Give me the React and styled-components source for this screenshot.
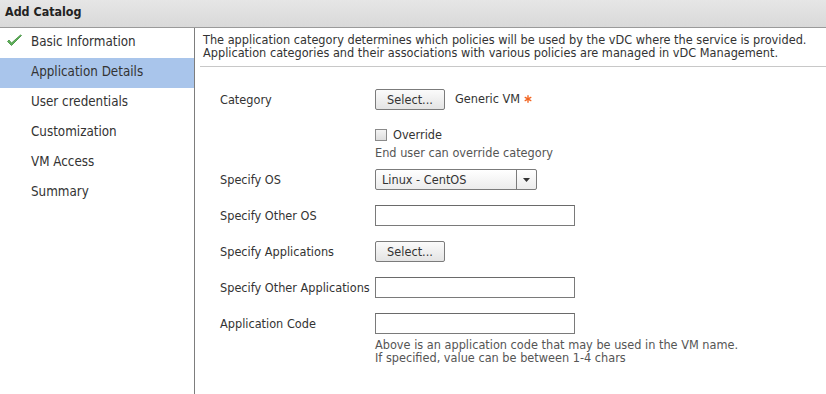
import React from 'react'
import styled, { createGlobalStyle } from 'styled-components'

const Global = createGlobalStyle`
  html, body { margin: 0; padding: 0; background: #fff; }
  body {
    font-family: "DejaVu Sans Condensed", "DejaVu Sans", sans-serif;
    font-size: 12.6px;
    color: #333;
  }
`

const Page = styled.div`
  width: 826px;
  height: 394px;
  display: flex;
  flex-direction: column;
  overflow: hidden;
`

const Header = styled.div`
  box-sizing: border-box;
  height: 28px;
  flex: none;
  display: flex;
  align-items: center;
  padding: 0 0 4px 5px;
  font-weight: bold;
  font-size: 12.4px;
  color: #222;
  background: linear-gradient(#e6e6e6, #d9d9d9);
  border-bottom: 1px solid #9a9a9a;
`

const Body = styled.div`
  flex: 1;
  display: flex;
`

const Sidebar = styled.ul`
  width: 194px;
  flex: none;
  margin: 0;
  padding: 0;
  list-style: none;
  border-right: 1px solid #7d7d7d;
`

const Step = styled.li`
  box-sizing: border-box;
  height: 30px;
  display: flex;
  align-items: center;
  padding: 0 0 3px 31px;
  position: relative;
  font-size: 13.3px;
  color: #333;
  background: ${p => (p.$active ? '#a9c5eb' : 'transparent')};
`

const Check = styled.svg`
  position: absolute;
  left: 6px;
  top: 6px;
`

const Content = styled.div`
  flex: 1;
  padding: 5px 0 0 5px;
`

const Intro = styled.p`
  margin: 0;
  padding: 0 0 7px 3px;
  line-height: 13px;
  color: #333;
  border-bottom: 1px solid #c8c8c8;
`

const Form = styled.div`
  padding: 22px 0 0 20px;
`

const Row = styled.div`
  display: grid;
  grid-template-columns: 155px 1fr;
  align-items: start;
  margin-bottom: ${p => p.$gap ?? 15}px;
`

const Label = styled.div`
  line-height: 21px;
  white-space: nowrap;
`

const Control = styled.div`
  display: flex;
  align-items: center;
  gap: 10px;
  flex-wrap: wrap;
`

const Button = styled.button`
  width: 70px;
  height: 21px;
  padding: 0;
  font: inherit;
  color: #333;
  border: 1px solid #7b7b7b;
  border-radius: 2px;
  background: linear-gradient(#fbfbfb, #e4e4e4);
`

const Value = styled.span`
  display: inline-flex;
  align-items: center;
  gap: 4px;
  margin-top: -2px;
`

const TextInput = styled.input`
  box-sizing: border-box;
  width: 200px;
  height: 21px;
  margin: 0;
  border: 1px solid #7a7a7a;
  border-top-color: #6a6a6a;
  background: #fff;
`

const Select = styled.div`
  box-sizing: border-box;
  width: 162px;
  height: 21px;
  display: flex;
  border: 1px solid #7b7b7b;
  border-radius: 2px;
  background: linear-gradient(#ffffff, #ececec);
`

const SelectText = styled.span`
  flex: 1;
  padding-left: 6px;
  line-height: 19px;
`

const SelectArrow = styled.span`
  width: 19px;
  border-left: 1px solid #7b7b7b;
  display: flex;
  align-items: center;
  justify-content: center;
`

const Stack = styled.div`
  display: flex;
  flex-direction: column;
`

const CheckLine = styled.label`
  display: flex;
  align-items: center;
  gap: 6px;
  line-height: 14px;
`

const Box = styled.span`
  box-sizing: border-box;
  width: 12px;
  height: 12px;
  border: 1px solid #8a8a8a;
  background: linear-gradient(#f4f4f4, #dedede);
`

const Hint = styled.div`
  color: #555;
  line-height: 13px;
  margin-top: ${p => p.$top ?? 0}px;
`

const steps = [
  'Basic Information',
  'Application Details',
  'User credentials',
  'Customization',
  'VM Access',
  'Summary',
]

const Asterisk = () => (
  <svg width="8" height="8" viewBox="0 0 8 8">
    <g stroke="#f26522" strokeWidth="1.4" strokeLinecap="round">
      <line x1="4" y1="0.8" x2="4" y2="7.2" />
      <line x1="1.2" y1="2.4" x2="6.8" y2="5.6" />
      <line x1="1.2" y1="5.6" x2="6.8" y2="2.4" />
    </g>
  </svg>
)

export default function App() {
  return (
    <Page>
      <Global />
      <Header>Add Catalog</Header>
      <Body>
        <Sidebar>
          {steps.map((s, i) => (
            <Step key={s} $active={i === 1}>
              {i === 0 && (
                <Check width="17" height="14" viewBox="0 0 17 14">
                  <path
                    d="M1.5 7.5 L5.5 11.5 L15.5 1.5 L14.5 1 L5.5 9 L3 6 Z"
                    fill="#5fb35a"
                    stroke="#3d8a3a"
                    strokeWidth="0.8"
                    strokeLinejoin="round"
                  />
                </Check>
              )}
              {s}
            </Step>
          ))}
        </Sidebar>
        <Content>
          <Intro>
            The application category determines which policies will be used by the vDC where the service is provided.
            <br />
            Application categories and their associations with various policies are managed in vDC Management.
          </Intro>
          <Form>
            <Row $gap={18}>
              <Label>Category</Label>
              <Control>
                <Button>Select...</Button>
                <Value>
                  Generic VM <Asterisk />
                </Value>
              </Control>
            </Row>
            <Row $gap={10}>
              <span />
              <Stack>
                <CheckLine>
                  <Box /> Override
                </CheckLine>
                <Hint $top={4}>End user can override category</Hint>
              </Stack>
            </Row>
            <Row>
              <Label>Specify OS</Label>
              <Control>
                <Select>
                  <SelectText>Linux - CentOS</SelectText>
                  <SelectArrow>
                    <svg width="7" height="4" viewBox="0 0 7 4">
                      <path d="M0 0 H7 L3.5 4 Z" fill="#333" />
                    </svg>
                  </SelectArrow>
                </Select>
              </Control>
            </Row>
            <Row>
              <Label>Specify Other OS</Label>
              <Control>
                <TextInput />
              </Control>
            </Row>
            <Row>
              <Label>Specify Applications</Label>
              <Control>
                <Button>Select...</Button>
              </Control>
            </Row>
            <Row>
              <Label>Specify Other Applications</Label>
              <Control>
                <TextInput />
              </Control>
            </Row>
            <Row $gap={0}>
              <Label>Application Code</Label>
              <Stack>
                <TextInput />
                <Hint $top={4}>
                  Above is an application code that may be used in the VM name.
                  <br />
                  If specified, value can be between 1-4 chars
                </Hint>
              </Stack>
            </Row>
          </Form>
        </Content>
      </Body>
    </Page>
  )
}
